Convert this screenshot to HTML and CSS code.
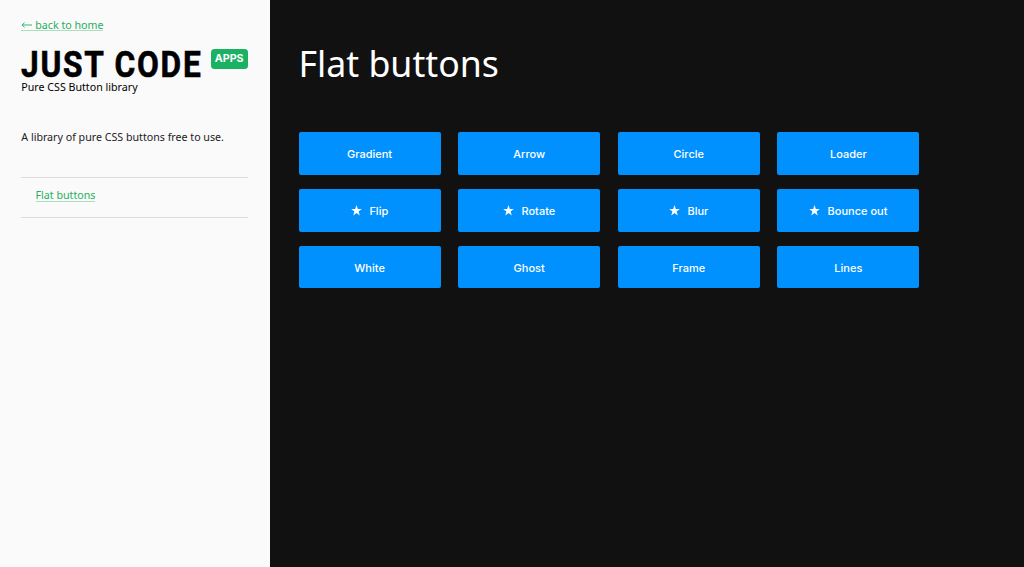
FILE: index.html
```html
<!DOCTYPE html>
<html lang="en">
<head>
<meta charset="utf-8">
<title>Flat buttons</title>
<link rel="stylesheet" href="styles.css">
</head>
<body>
<aside class="sidebar">
  <a class="back" href="#"><svg class="back-arrow" viewBox="0 0 11 8"><path d="M11 4H1M3.6 1.6L1 4l2.6 2.4"/></svg><span>back to home</span></a>
  <div class="brand">
    <svg class="logo" viewBox="0 0 180 28"><text x="0" y="26.8" textLength="181.5" lengthAdjust="spacingAndGlyphs">JUST CODE</text></svg>
    <span class="badge">APPS</span>
  </div>
  <p class="tagline">Pure CSS Button library</p>
  <p class="intro">A library of pure CSS buttons free to use.</p>
  <nav class="menu"><a href="#">Flat buttons</a></nav>
</aside>
<main class="content">
  <h1>Flat buttons</h1>
  <div class="grid">
    <button>Gradient</button>
    <button>Arrow</button>
    <button>Circle</button>
    <button>Loader</button>
    <button><svg class="star" viewBox="0 0 24 24"><path d="M12 0l3 9h9l-7.2 5.6L19.5 24 12 18.3 4.5 24l2.7-9.4L0 9h9z"/></svg>Flip</button>
    <button><svg class="star" viewBox="0 0 24 24"><path d="M12 0l3 9h9l-7.2 5.6L19.5 24 12 18.3 4.5 24l2.7-9.4L0 9h9z"/></svg>Rotate</button>
    <button><svg class="star" viewBox="0 0 24 24"><path d="M12 0l3 9h9l-7.2 5.6L19.5 24 12 18.3 4.5 24l2.7-9.4L0 9h9z"/></svg>Blur</button>
    <button><svg class="star" viewBox="0 0 24 24"><path d="M12 0l3 9h9l-7.2 5.6L19.5 24 12 18.3 4.5 24l2.7-9.4L0 9h9z"/></svg>Bounce out</button>
    <button>White</button>
    <button>Ghost</button>
    <button>Frame</button>
    <button>Lines</button>
  </div>
</main>
</body>
</html>
```
FILE: styles.css
```css
* { box-sizing: border-box; }
body {
  margin: 0;
  height: 567px;
  display: flex;
  background: #111;
  font: 10.67px/16px "Noto Sans", sans-serif;
  overflow: hidden;
}
p, h1 { margin: 0; }
.sidebar {
  width: 270px;
  height: 567px;
  padding: 17px 22px 0 21.3px;
  background: #fafafa;
  color: #222;
}
.back {
  display: flex;
  align-items: center;
  width: max-content;
  height: 14px;
  gap: 3px;
  color: #27ae60;
  text-decoration: none;
  border-bottom: 1px solid #a9dfbf;
}
.back-arrow {
  width: 11px;
  height: 8px;
  margin-top: 3px;
  fill: none;
  stroke: #27ae60;
  stroke-width: .9;
}
.back span { position: relative; top: 1px; }
.brand {
  display: flex;
  align-items: flex-start;
  gap: 9px;
  margin-top: 18px;
  height: 30px;
}
.logo {
  width: 180px;
  height: 28px;
  margin-top: 1px;
  overflow: visible;
  font: 700 36px Roboto, sans-serif;
  letter-spacing: 2px;
  stroke: #000;
  stroke-width: .6;
}
.badge {
  width: 37px;
  height: 20px;
  margin-left: .4px;
  border-radius: 3.5px;
  background: #1bb163;
  color: #fff;
  font: 700 10.7px/20px Inter, sans-serif;
  text-align: center;
}
.tagline { color: #000; }
.intro { margin-top: 34px; }
.menu {
  margin-top: 31.5px;
  height: 41.2px;
  padding: 9.5px 14.3px 0;
  border-top: 1px solid #ddd;
  border-bottom: 1px solid #ddd;
}
.menu a {
  display: block;
  width: max-content;
  height: 15px;
  color: #27ae60;
  text-decoration: none;
  border-bottom: 1px solid #a9dfbf;
}
.content { padding: 39px 0 0 28.5px; }
h1 {
  height: 93px;
  color: #fff;
  font-size: 35.7px;
  font-weight: 400;
  line-height: 49px;
}
.grid {
  display: grid;
  grid-template-columns: repeat(4, 142.2px);
  grid-auto-rows: 42.67px;
  gap: 14.22px 17.4px;
}
button {
  display: flex;
  align-items: center;
  justify-content: center;
  padding: 1px 0 0;
  border: 0;
  border-radius: 2px;
  background: #0091ff;
  color: #fff;
  font: 500 11px Inter, sans-serif;
}
.star {
  width: 11px;
  height: 10.5px;
  margin-right: 7.4px;
  fill: #fff;
}
```
